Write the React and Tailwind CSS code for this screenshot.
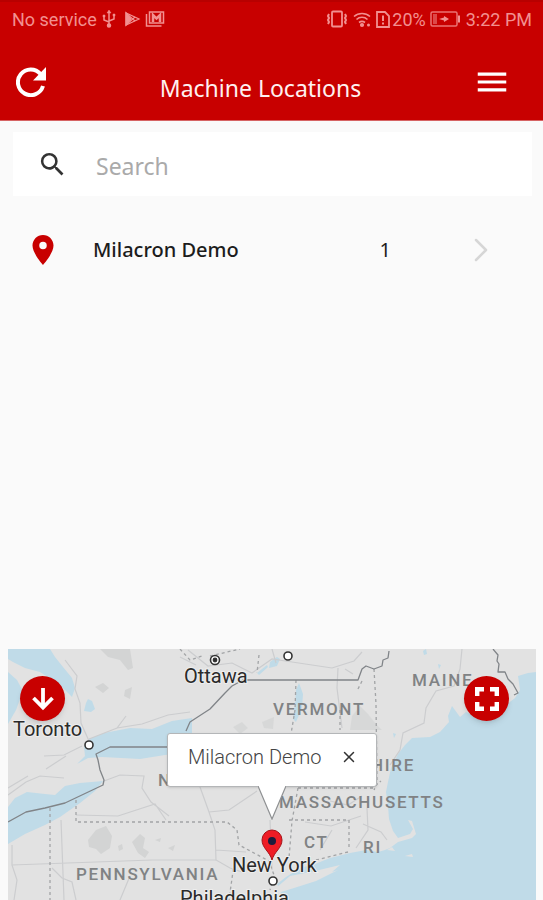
import React, { useState } from 'react';
import { MdMenu, MdSearch, MdLocationOn } from 'react-icons/md';
import { ChevronRight, X } from 'lucide-react';


const locations = [
    { id : 1, name : "Milacron Demo", count : 1 }
];

const states = [
    { name : "MAINE", x : 412, y : 686 },
    { name : "VERMONT", x : 273, y : 715 },
    { name : "N", x : 158, y : 786 },
    { name : "HIRE", x : 371, y : 771 },
    { name : "MASSACHUSETTS", x : 279, y : 808 },
    { name : "CT", x : 304, y : 848 },
    { name : "RI", x : 363, y : 853 },
    { name : "PENNSYLVANIA", x : 76, y : 880 }
];

const cities = [
    { name : "Ottawa", x : 184, y : 683 },
    { name : "Toronto", x : 13, y : 736 },
    { name : "New York", x : 232, y : 872 },
    { name : "Philadelphia", x : 180, y : 905 }
];

const StatusBar = () => {
    return (
        <div className="flex h-9 items-center justify-between border-t-2 border-[#b80000] pl-3 pr-[11px] font-['Roboto',sans-serif] text-[18px] text-[#f29090]">
            <div className="flex items-center">
                <span>No service</span>
                <svg className="ml-1 h-[18px] w-4" viewBox="0 0 16 18" fill="none" stroke="currentColor" strokeWidth="1.5">
                    <path d="M8 2v13M3 7v3l5 2M13 6v3l-5 2" />
                    <path d="M8 0l2 3H6z M2 5h2v2H2z M12 4h2v2h-2z" fill="currentColor" strokeWidth="0.5" />
                    <circle cx="8" cy="15.5" r="1.5" fill="currentColor" />
                </svg>
                <svg className="ml-2 h-[18px] w-4" viewBox="0 0 16 18" fill="none" stroke="currentColor" strokeWidth="1.2">
                    <path d="M1 3v12l13-6z" />
                    <path d="M1 3l9 8M1 15l9-8" />
                    <path d="M1 3l5 6-5 6z" fill="currentColor" />
                </svg>
                <svg className="ml-1 h-[18px] w-5" viewBox="0 0 20 18" fill="none" stroke="currentColor">
                    <path d="M1.500 4v12h15" strokeWidth="1.5" />
                    <rect x="4.500" y="2" width="14" height="11" strokeWidth="1.5" />
                    <path d="M8 12V5l3.500 3.500L15 5v7" strokeWidth="2.500" />
                </svg>
            </div>
            <div className="flex items-center">
                <svg className="h-[18px] w-[22px]" viewBox="0 0 22 18" fill="none" stroke="currentColor" strokeWidth="1.8">
                    <rect x="6" y="1.500" width="10" height="15" rx="1" />
                    <path d="M3 4l-1 2 1 2-1 2 1 2-1 2M19 4l1 2-1 2 1 2-1 2 1 2" strokeWidth="2" />
                </svg>
                <svg className="ml-1 h-[18px] w-5" viewBox="0 0 20 18" fill="none" stroke="currentColor" strokeWidth="1.600">
                    <path d="M2 6.500c4.500-4 11.500-4 16 0M4.500 9.500c3-3 8-3 11 0M7 12.500c2-1.500 4-1.500 6 0" />
                    <circle cx="10" cy="15" r="1.300" fill="currentColor" />
                    <circle cx="16.500" cy="15" r="0.700" fill="currentColor" />
                </svg>
                <svg className="ml-1 h-[18px] w-[14px]" viewBox="0 0 14 18" fill="none" stroke="currentColor" strokeWidth="1.800">
                    <path d="M1 2h8l4 4v11H1z" />
                    <path d="M7 5.500v5.500M7 12.500v2" strokeWidth="2" />
                </svg>
                <span className="ml-[2px]">20%</span>
                <svg className="ml-1 h-[18px] w-8" viewBox="0 0 32 18" fill="none" stroke="currentColor" strokeWidth="1.500">
                    <rect x="1" y="2" width="26" height="14" rx="1.500" opacity="0.8" />
                    <path d="M3 4h4v10H3z" fill="currentColor" stroke="none" opacity="0.5" />
                    <path d="M9 9l5-1.500V6l5 3-5 3v-1.500z" fill="currentColor" stroke="none" />
                    <path d="M29 5.500v7" strokeWidth="2" />
                </svg>
                <span className="ml-1">3:22 PM</span>
            </div>
        </div>
    )
}

const Header = () => {
    return (
        <header className="border-b border-[#d66464] bg-[#c80000]">
            <StatusBar />
            <div className="grid h-[84px] grid-cols-[1fr_auto_1fr] items-center pl-[10px] pr-8 pt-2">
                <button type="button" aria-label="Refresh" className="justify-self-start p-[6px] text-white">
                    <svg className="h-[30px] w-[30px]" viewBox="0 0 30 30" fill="none" stroke="currentColor" strokeWidth="4">
                        <path d="M24.500 7a12.800 12.800 0 1 0 2.500 12" />
                        <path d="M30 0v13.500H17z" fill="currentColor" stroke="none" />
                    </svg>
                </button>
                <h1 className="pt-3 font-['Noto_Sans',sans-serif] text-[23px] leading-8 text-[#fff0f0]">Machine Locations</h1>
                <button type="button" aria-label="Menu" className="justify-self-end text-white">
                    <MdMenu className="h-[38px] w-[38px]" />
                </button>
            </div>
        </header>
    )
}

const MapDrawing = () => {
    return (
        <svg className="block h-full w-full" viewBox="8 649 528 251" preserveAspectRatio="xMidYMin slice">
            <rect x="8" y="649" width="528" height="251" fill="#e2e2e2" />

            {/* shaded uplands */}
            <g fill="#d3d4d4">
                <path d="M100 649l8 8 12 3 8 10 5-2-3-19z" />
                <path d="M95 687l8-4 6 5-6 5zM125 690l7-3-2 12-6-3z" />
                <path d="M88 840l8-10 10-4 6 10-2 12-9 6-5-5-7-2zM132 842l8-8 5 4-2 10 6 4-4 6-7-5z" />
                <path d="M233 727l9-5 6 6-8 6zM262 722l12-5-1 12-9-1zM350 730l2-14 8-10 8 8 8 10 6 6z" opacity="0.7" />
                <path d="M118 846l4-2 1 5-4 2zM155 840l6-2-1 4zM168 848l7-3-2 6z" />
            </g>

            {/* lakes and ocean */}
            <g fill="#c0dbe8">
                <path d="M8 649h42l5 8 8 10 9 11 3 10-3 9-8-8-10-8-14-9-15-4-12-6-5-3z" />
                <path d="M8 672l9 8 6 11-7 19-8 14z" />
                <path d="M86 703l2-4 4 2 3 8-4 3-7-1z" />
                <path d="M77 764l8-8-1-9 5-8 15-6 26-5 22 1 20-8 20-3v34l-27 3-25 4-38-2-14 1z" />
                <path d="M8 807l7-9 12-6 18 2 10 1 10-9 15-3 23-2-8 10-15 12-20 14-15 8-20 9-17 10z" />
                <path d="M270 662l7-5 3 2-3 7-8 2zM257 673l10-8 1 2-9 8zM296 690l3-7 4 11-1 14-6 14-3-3 2-14z" />
                <path d="M536 672L528 673L518 676L520 690L515 698L502 708L494 714L478 718L466 712L460 717L452 706L448 716L449 722L440 732L430 737L412 738L405 745L398 754L391 768L388 782L386 792L388 806L389 819L393 831L398 838L410 834L413 829L408 820L412 821L416 834L412 838L398 842L390 848L385 850L378 852L366 850L350 853L330 858L315 864L300 868L286 877L277 884L281 892L279 900H536z" />
                <path d="M423 651l3-2 1 5-3 1zM438 664l3 1-2 4zM393 733l3 1-2 4z" />
            </g>
            <path d="M276 888L290 876L315 871L340 865L332 872L338 870L316 881L294 888L281 892z" fill="#e2e2e2" />
            <path d="M387 850l5-3 3 4zM405 856l7-2 1 3z" fill="#e2e2e2" />

            {/* roads */}
            <g fill="none" stroke="#cccdcf" strokeWidth="1.200">
                <path d="M65 660l12 16-2 13 5 14 1 20 8 18M89 739l28-11 9-12M117 728l25-4 26-9 22-3M44 756l20-1 18-9M46 769l20-13" />
                <path d="M8 795l18-13 14-6 24 2M8 788l20-12M104 781l16-6 24 1-2 12 9 14 18 14M76 815l42 1 37-12 11 16M12 845l0 20 140-5 64 0M61 820l3 80M12 865l5 15-3 20M52 868l10 10 10 4 4 18M130 876l-10 24" />
                <path d="M200 787l9 25 6 18 1 30 14 8 12 4M209 812l20-2 28-19M216 850l30 2M270 820l2 50" />
                <path d="M188 650l20 16 24-3 20 10 20-14 20 3 40 6 22-7 8-9M338 668l-1 20 5 40M345 669l8 5M180 657l16 8M272 649l4 14M462 649l-2 20-6 17-18 5-10 17-2 15-21 10-3 17-10 15" />
                <path d="M330 801l18 4 14-9M305 822l26 4 30-10M320 850l12-20M367 808l1 22-12 18M363 824l18 8 6 8" />
            </g>

            {/* state lines */}
            <g fill="none" stroke="#a2a4a6" strokeWidth="1.300" strokeDasharray="3 3">
                <path d="M76 800v22h151l10 8 2 15 30 16 5 14-4 15M50 808v92M296 680l-1 30-4 24M362 681l-5 10M340 710l0 20M374 669l2 35 1 80-3 6M298 788l-6 33-3 37M298 788h75l8-7M289 820h60v30M316 860l32-8M180 649l10 11 12-4M235 857l-6 43M210 656l30-7M259 655l-2 18" />
            </g>
            <g fill="none" stroke="#808488" strokeWidth="1.300" strokeLinejoin="round">
                <path d="M8 822l18-10 19-4 20-5 38-18 1-5-4-10-2-10-2-6 14-7h80M186 731l4-9 20-13 15-16 7-7 11-6h115l4-11 4-3 8 3 8-3 1-6 5-2 1-7" />
                <path d="M493 649l5 6-1 6 2 3-1 8 7 0 3 7 5 5 5 9-4 2" />
            </g>

            <g className="font-['Roboto',sans-serif] text-[17px] font-medium tracking-widest" fill="#808284">
                {states.map((item) => (
                    <text key={item.name} x={item.x} y={item.y}>{item.name}</text>
                ))}
            </g>

            <g fill="#fff" stroke="#333" strokeWidth="1.600">
                <circle cx="215" cy="660" r="4.500" />
                <circle cx="215" cy="660" r="1.600" fill="#222" />
                <circle cx="288" cy="656" r="4" />
                <circle cx="89" cy="745" r="4" />
                <circle cx="273" cy="881" r="4" />
            </g>

            <g className="font-['Roboto',sans-serif] text-[20px]" fill="#2a2a2a" stroke="#eee" strokeWidth="2" paintOrder="stroke">
                {cities.map((item) => (
                    <text key={item.name} x={item.x} y={item.y}>{item.name}</text>
                ))}
            </g>

            <path d="M272 860c-2-8-10-12-10-20a10 10 0 0 1 20 0c0 8-8 12-10 20z" fill="#ee1c25" stroke="#a51218" strokeWidth="1" />
            <circle cx="272" cy="841" r="4" fill="#1c1c3c" />
        </svg>
    )
}

const Callout = ({ name, onClose }) => {
    return (
        <div className="absolute left-1/2 top-[84px] w-[210px] -translate-x-1/2">
            <div className="flex h-[54px] items-center justify-between rounded-[3px] border border-[#b4b6b8] bg-white pl-5 pr-[18px] pb-[6px] shadow-sm">
                <span className="font-['Roboto',sans-serif] text-[20px] font-light text-[#444]">{name}</span>
                <button type="button" aria-label="Close" onClick={onClose} className="text-[#333]">
                    <X className="h-[18px] w-[18px]" strokeWidth={2} />
                </button>
            </div>
            <svg className="relative -mt-px mx-auto block h-[34px] w-7" viewBox="0 0 28 34">
                <path d="M0 0l14 33L28 0z" fill="#fff" />
                <path d="M0 0l14 33L28 0" fill="none" stroke="#8e9092" strokeWidth="1.200" />
            </svg>
        </div>
    )
}

const App = () => {

    const [search, setSearch] = useState("");
    const [callout, setCallout] = useState(true);

    const results = locations.filter((item) => item.name.toLowerCase().includes(search.toLowerCase()));

    return (
        <div className="flex h-screen flex-col overflow-hidden bg-[#fafafa] font-['Noto_Sans',sans-serif]">

            <Header />

            <main className="flex flex-1 flex-col">
                <div className="ml-[13px] mr-[11px] mt-[11px] flex h-16 items-center bg-white pl-6">
                    <label htmlFor="search" aria-label="Search" className="text-[#333]">
                        <MdSearch className="h-[31px] w-[31px]" />
                    </label>
                    <input id="search" type="text" value={search} onChange={(e) => setSearch(e.target.value)} placeholder="Search" className="ml-7 min-w-0 flex-1 pt-1 text-[23px] text-[#333] outline-none placeholder:text-[#aaa]" />
                </div>

                <ul className="mt-[22px]">
                    {results.map((item) => (
                        <li key={item.id}>
                            <button type="button" onClick={() => setCallout(true)} className="flex h-16 w-full items-center pl-[25px] pr-[42px] text-left text-[20px] text-[#1c1c1c]">
                                <MdLocationOn className="h-9 w-9 text-[#c80000]" />
                                <span className="ml-8 flex-1 font-medium">{item.name}</span>
                                <span className="mr-[70px]">{item.count}</span>
                                <ChevronRight className="h-10 w-10 text-[#d6d6d6]" strokeWidth={1.5} />
                            </button>
                        </li>
                    ))}
                </ul>
            </main>

            <section aria-label="Map" className="relative ml-2 mr-[7px] h-[251px] overflow-hidden">
                <MapDrawing />
                {callout && <Callout name={locations[0].name} onClose={() => setCallout(false)} />}
                <button type="button" aria-label="Collapse map" className="absolute left-3 top-[27px] flex h-[45px] w-[45px] items-center justify-center rounded-full bg-[#c80000] text-white shadow-md">
                    <svg className="h-6 w-6" viewBox="0 0 24 24" fill="none" stroke="currentColor" strokeWidth="3.8">
                        <path d="M12 1v19M2.500 11l9.500 9.500 9.500-9.500" />
                    </svg>
                </button>
                <button type="button" aria-label="Full screen" className="absolute right-[27px] top-[27px] flex h-[45px] w-[45px] items-center justify-center rounded-full bg-[#c80000] text-white shadow-md">
                    <svg className="h-6 w-6" viewBox="0 0 24 24" fill="none" stroke="currentColor" strokeWidth="4.400">
                        <path d="M2.200 9V2.200H9M15 2.200h6.800V9M21.800 15v6.800H15M9 21.800H2.200V15" />
                    </svg>
                </button>
            </section>

        </div>
    )
}

export default App;
